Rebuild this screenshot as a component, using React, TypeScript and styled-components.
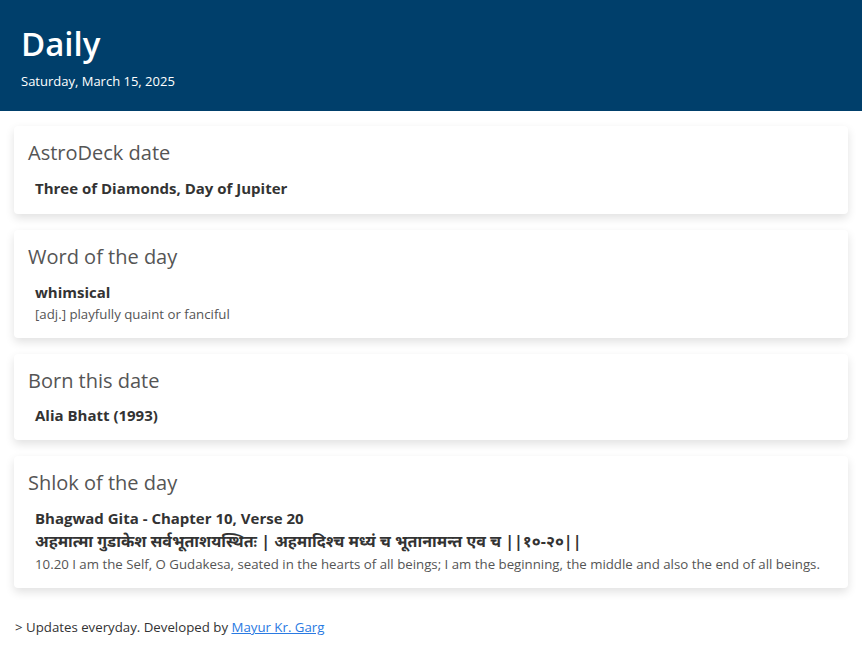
import React from "react";
import styled, { createGlobalStyle } from "styled-components";

const Global = createGlobalStyle`
  html, body { margin: 0; padding: 0; background: #ffffff; }
  body { font-family: "Open Sans", "Noto Sans", "Noto Sans Devanagari", sans-serif; color: #333; }
`;

const Header = styled.header`
  background: #003f6b;
  color: #fff;
  padding: 24px 21px 22px;
  height: 111px;
  box-sizing: border-box;
`;

const Title = styled.h1`
  margin: 0;
  font-size: 33px;
  font-weight: 600;
  line-height: 40px;
`;

const DateLine = styled.div`
  margin-top: 8px;
  font-size: 13px;
  line-height: 18px;
`;

const Main = styled.main`
  display: flex;
  flex-direction: column;
  gap: 16px;
  padding: 15px 14px 0;
`;

const Card = styled.section`
  background: #fff;
  border-radius: 4px;
  box-shadow: 0 4px 10px rgba(0, 0, 0, 0.12);
  padding: 14px 14px 15px;
`;

const CardTitle = styled.h2`
  margin: 0 0 11px;
  font-size: 20px;
  font-weight: 400;
  color: #555;
  line-height: 26px;
`;

const Body = styled.div`
  padding-left: 7px;
  display: flex;
  flex-direction: column;
`;

const Strong = styled.div<{ $size?: number; $lh?: number }>`
  font-weight: 700;
  font-size: ${(p) => p.$size ?? 15}px;
  line-height: ${(p) => p.$lh ?? 22}px;
  color: #333;
`;

const Note = styled.div`
  margin-top: 2px;
  font-size: 13.25px;
  line-height: 18px;
  color: #555;
`;

const Footer = styled.footer`
  padding: 30px 15px 0;
  font-size: 13.25px;
  color: #333;
`;

const Link = styled.a`
  color: #2a7ae2;
  text-decoration: underline;
`;

export default function App() {
  return (
    <>
      <Global />
      <Header>
        <Title>Daily</Title>
        <DateLine>Saturday, March 15, 2025</DateLine>
      </Header>
      <Main>
        <Card>
          <CardTitle>AstroDeck date</CardTitle>
          <Body>
            <Strong>Three of Diamonds, Day of Jupiter</Strong>
          </Body>
        </Card>
        <Card>
          <CardTitle>Word of the day</CardTitle>
          <Body>
            <Strong>whimsical</Strong>
            <Note>[adj.] playfully quaint or fanciful</Note>
          </Body>
        </Card>
        <Card>
          <CardTitle>Born this date</CardTitle>
          <Body>
            <Strong $lh={20}>Alia Bhatt (1993)</Strong>
          </Body>
        </Card>
        <Card>
          <CardTitle>Shlok of the day</CardTitle>
          <Body>
            <Strong>Bhagwad Gita - Chapter 10, Verse 20</Strong>
            <Strong $size={16} $lh={24}>
              अहमात्मा गुडाकेश सर्वभूताशयस्थितः | अहमादिश्च मध्यं च भूतानामन्त एव च ||१०-२०||
            </Strong>
            <Note>
              10.20 I am the Self, O Gudakesa, seated in the hearts of all beings; I am the beginning, the middle and
              also the end of all beings.
            </Note>
          </Body>
        </Card>
      </Main>
      <Footer>
        &gt; Updates everyday. Developed by <Link href="#">Mayur Kr. Garg</Link>
      </Footer>
    </>
  );
}
